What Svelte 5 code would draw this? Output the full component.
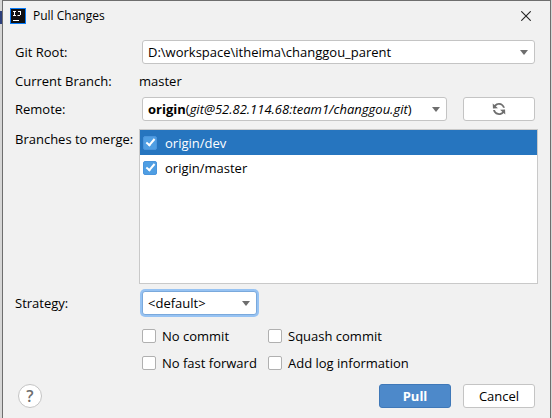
<script>
  let root = $state('D:\\workspace\\itheima\\changgou_parent');
  let remote = $state('origin');
  let strategy = $state('<default>');
  let branches = $state([
    { name: 'origin/dev', checked: true },
    { name: 'origin/master', checked: true }
  ]);
  let selected = $state(0);
  let options = $state([
    { name: 'No commit', checked: false },
    { name: 'Squash commit', checked: false },
    { name: 'No fast forward', checked: false },
    { name: 'Add log information', checked: false }
  ]);
</script>

{#snippet box(item)}
  <label class="check">
    <input type="checkbox" bind:checked={item.checked} />
    <span>{item.name}</span>
  </label>
{/snippet}

<div class="desktop">
  <main class="dialog">
    <header>
      <svg class="logo" viewBox="0 0 16 16" aria-hidden="true">
        <rect width="16" height="16" fill="#087cfa" />
        <rect x="1" y="1" width="14" height="14" fill="#101012" />
        <path d="M3 3.5h3M4.5 3v5M3 7.5h3M8 3.5h3M10.5 3v4M7.5 7.5h2.5" fill="none" stroke="#fff" />
        <path d="M3 12.5h6" stroke="#fff" />
      </svg>
      <h1>Pull Changes</h1>
      <button class="close" aria-label="Close">
        <svg viewBox="0 0 10 10"><path d="M.3.3l9.4 9.4M9.7.3L.3 9.7" fill="none" stroke="#222" stroke-width="1.1" /></svg>
      </button>
    </header>

    <div class="form">
      <label for="root">Git Root:</label>
      <div class="controls">
        <div class="combo wide">
          <select id="root" bind:value={root}><option>D:\workspace\itheima\changgou_parent</option></select>
        </div>
      </div>

      <span>Current Branch:</span>
      <span>master</span>

      <label for="remote">Remote:</label>
      <div class="controls">
        <div class="combo wide rich">
          <select id="remote" bind:value={remote}><option>origin</option></select>
          <span class="value" aria-hidden="true"><b>origin</b>(<i>git@52.82.114.68:team1/changgou.git</i>)</span>
        </div>
        <button class="btn" aria-label="Refresh">
          <svg class="refresh" viewBox="0 0 16 16">
            <path fill="#6e6e6e" d="M12.575 11.885C11.474 13.182 9.832 14.004 7.999 14.004 5.039 14.004 2.58 11.862 2.088 9.043L3.948 9.108C4.434 10.89 6.064 12.2 8 12.2 9.301 12.2 10.465 11.608 11.235 10.679L9.05 8.712 14.043 8.45 14.305 13.443ZM3.428 4.117C4.528 2.825 6.168 2.004 7.999 2.004 10.919 2.004 13.351 4.09 13.888 6.853L12.023 6.788C11.502 5.059 9.898 3.8 8 3.8 6.699 3.8 5.535 4.392 4.765 5.321L6.955 7.293 1.962 7.555 1.7 2.562Z" />
          </svg>
        </button>
      </div>

      <span class="top">Branches to merge:</span>
      <ul class="list">
        {#each branches as branch, i}
          <li class:selected={selected === i}>{@render box(branch)}</li>
        {/each}
      </ul>

      <label for="strategy">Strategy:</label>
      <div class="controls">
        <div class="combo focused">
          <select id="strategy" bind:value={strategy}><option>{'<default>'}</option></select>
        </div>
      </div>

      <div class="options">
        {#each options as option}
          {@render box(option)}
        {/each}
      </div>
    </div>

    <footer>
      <button class="help" aria-label="Help">?</button>
      <button class="btn primary">Pull</button>
      <button class="btn">Cancel</button>
    </footer>
  </main>
</div>

<style>
  :global(body) {
    background: #d6d6d6;
  }
  .desktop {
    box-sizing: border-box;
    min-height: 100vh;
    padding: 0 1px 0 2px;
    display: flex;
    background: linear-gradient(#2c3f7c, #2c3f7c) 0 11px / 2px 13px no-repeat;
    color: #000;
    font: 13px/20px 'Open Sans', 'Noto Sans', sans-serif;
  }
  .dialog {
    box-sizing: border-box;
    flex: 1;
    min-width: 0;
    display: flex;
    flex-direction: column;
    background: #f1f1f1;
    border: 1px solid #6e6e6e;
    border-bottom: 0;
  }
  header {
    display: flex;
    align-items: center;
    gap: 7px;
    height: 29px;
    padding: 0 19px 0 7px;
  }
  .logo {
    width: 16px;
    height: 16px;
  }
  h1 {
    flex: 1;
    margin: 0;
    font-size: 12px;
    font-weight: 400;
  }
  button {
    font: inherit;
    padding: 0;
  }
  .close {
    border: 0;
    background: none;
    width: 10px;
    height: 10px;
    display: flex;
  }
  .close svg {
    width: 10px;
    height: 10px;
  }
  .form {
    display: grid;
    grid-template-columns: 124px minmax(0, 1fr);
    grid-template-rows: 44px 14px 41px 155px 38px auto;
    align-items: center;
    padding: 0 12px;
  }
  .controls {
    display: flex;
    gap: 16px;
    padding: 0 3px;
  }
  .combo {
    position: relative;
    width: 115px;
  }
  .combo.wide {
    flex: 1;
    width: auto;
    min-width: 0;
  }
  select {
    display: block;
    box-sizing: border-box;
    width: 100%;
    height: 24px;
    padding: 0 24px 0 5px;
    appearance: none;
    border: 1px solid #c4c4c4;
    border-radius: 3px;
    background: #fff;
    color: #000;
    font: inherit;
    outline: none;
  }
  .combo::after {
    content: '';
    position: absolute;
    top: 10px;
    right: 7px;
    border: solid transparent;
    border-width: 5px 4px 0;
    border-top-color: #6e6e6e;
    pointer-events: none;
  }
  .rich select {
    color: transparent;
  }
  .rich option {
    color: #000;
  }
  .value {
    position: absolute;
    inset: 2px 20px 2px 6px;
    white-space: nowrap;
    pointer-events: none;
  }
  .focused select {
    border-color: #7aa9dc;
    box-shadow: 0 0 0 2px #97c3f3;
  }
  .btn {
    box-sizing: border-box;
    width: 72px;
    height: 24px;
    display: flex;
    align-items: center;
    justify-content: center;
    border: 1px solid #c4c4c4;
    border-radius: 3px;
    background: #fff;
    color: #000;
  }
  .refresh {
    width: 16px;
    height: 16px;
  }
  .top {
    align-self: start;
  }
  .list {
    box-sizing: border-box;
    align-self: stretch;
    margin: 0;
    padding: 0;
    list-style: none;
    border: 1px solid #c9c9c9;
    background: #fff;
  }
  li {
    height: 25px;
    padding-left: 3px;
    display: flex;
    align-items: center;
  }
  .selected {
    background: #2675bf;
    color: #fff;
  }
  .check {
    display: flex;
    align-items: center;
    gap: 6px;
  }
  .list .check {
    gap: 8px;
  }
  input {
    box-sizing: border-box;
    appearance: none;
    width: 14px;
    height: 14px;
    margin: 0;
    border: 1px solid #b0b0b0;
    border-radius: 2px;
    background: #fff;
    display: grid;
    place-items: center;
  }
  input:checked {
    border-color: #4a94dc;
    background: #4f9ee3;
  }
  input:checked::before {
    content: '';
    width: 3px;
    height: 7px;
    margin-bottom: 2px;
    border: solid #fff;
    border-width: 0 2px 2px 0;
    transform: rotate(40deg);
  }
  .options {
    grid-column: 2;
    padding: 0 3px;
    display: grid;
    grid-template-columns: 126px 1fr;
    grid-auto-rows: 27px;
  }
  footer {
    display: flex;
    align-items: center;
    gap: 12px;
    padding: 8px 15px 10px;
  }
  .help {
    width: 24px;
    height: 24px;
    margin-right: auto;
    border: 1px solid #c4c4c4;
    border-radius: 50%;
    background: #fff;
    color: #6e6e6e;
    font-size: 16px;
    font-weight: 600;
    line-height: 20px;
  }
  .primary {
    border-color: #3f78b8;
    background: #4d89ca;
    color: #fff;
    font-weight: 700;
  }
</style>
